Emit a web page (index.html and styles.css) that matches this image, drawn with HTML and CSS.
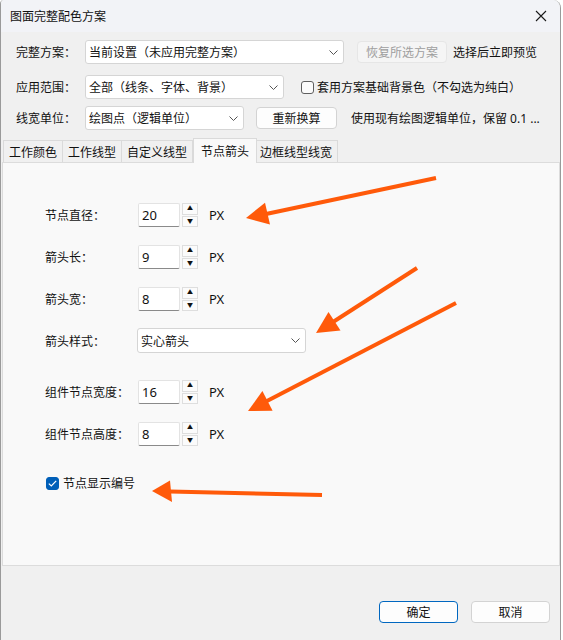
FILE: index.html
```html
<!DOCTYPE html>
<html lang="zh-CN">
<head>
    <meta charset="UTF-8">
    <title>图面完整配色方案</title>
    <link rel="stylesheet" href="styles.css">
</head>
<body>
    <div class="window">
        <div class="titlebar">
            <span class="title">图面完整配色方案</span>
            <span class="close">
                <svg width="12" height="12" viewBox="0 0 12 12"><path d="M1 1 L11 11 M11 1 L1 11" stroke="#1a1a1a" stroke-width="1.1" fill="none"/></svg>
            </span>
        </div>

        <div class="content">
            <div class="setting-row row-scheme">
                <span class="row-label">完整方案：</span>
                <div class="combo combo-scheme">
                    <span>当前设置（未应用完整方案）</span>
                    <svg class="chevron" width="9" height="5" viewBox="0 0 9 5"><path d="M0.5 0.5 L4.5 4.5 L8.5 0.5" stroke="#555" fill="none"/></svg>
                </div>
                <button class="btn btn-restore" disabled>恢复所选方案</button>
                <span class="hint">选择后立即预览</span>
            </div>

            <div class="setting-row row-range">
                <span class="row-label">应用范围：</span>
                <div class="combo combo-range">
                    <span>全部（线条、字体、背景）</span>
                    <svg class="chevron" width="9" height="5" viewBox="0 0 9 5"><path d="M0.5 0.5 L4.5 4.5 L8.5 0.5" stroke="#555" fill="none"/></svg>
                </div>
                <label class="check check-bg">
                    <span class="box"></span>
                    <span>套用方案基础背景色（不勾选为纯白）</span>
                </label>
            </div>

            <div class="setting-row row-unit">
                <span class="row-label">线宽单位：</span>
                <div class="combo combo-unit">
                    <span>绘图点（逻辑单位）</span>
                    <svg class="chevron" width="9" height="5" viewBox="0 0 9 5"><path d="M0.5 0.5 L4.5 4.5 L8.5 0.5" stroke="#555" fill="none"/></svg>
                </div>
                <button class="btn btn-recalc">重新换算</button>
                <span class="hint">使用现有绘图逻辑单位，保留 0.1 ...</span>
            </div>

            <div class="tabs">
                <span class="tab">工作颜色</span>
                <span class="tab">工作线型</span>
                <span class="tab">自定义线型</span>
                <span class="tab active">节点箭头</span>
                <span class="tab">边框线型线宽</span>
            </div>

            <div class="panel">
                <div class="field">
                    <span class="field-label">节点直径：</span>
                    <div class="spin-input">20</div>
                    <div class="spinner"><span class="up">▲</span><span class="down">▼</span></div>
                    <span class="unit">PX</span>
                </div>
                <div class="field">
                    <span class="field-label">箭头长：</span>
                    <div class="spin-input">9</div>
                    <div class="spinner"><span class="up">▲</span><span class="down">▼</span></div>
                    <span class="unit">PX</span>
                </div>
                <div class="field">
                    <span class="field-label">箭头宽：</span>
                    <div class="spin-input">8</div>
                    <div class="spinner"><span class="up">▲</span><span class="down">▼</span></div>
                    <span class="unit">PX</span>
                </div>
                <div class="field field-style">
                    <span class="field-label">箭头样式：</span>
                    <div class="combo combo-style">
                        <span>实心箭头</span>
                        <svg class="chevron" width="9" height="5" viewBox="0 0 9 5"><path d="M0.5 0.5 L4.5 4.5 L8.5 0.5" stroke="#555" fill="none"/></svg>
                    </div>
                </div>
                <div class="field">
                    <span class="field-label">组件节点宽度：</span>
                    <div class="spin-input">16</div>
                    <div class="spinner"><span class="up">▲</span><span class="down">▼</span></div>
                    <span class="unit">PX</span>
                </div>
                <div class="field">
                    <span class="field-label">组件节点高度：</span>
                    <div class="spin-input">8</div>
                    <div class="spinner"><span class="up">▲</span><span class="down">▼</span></div>
                    <span class="unit">PX</span>
                </div>
                <label class="check check-number">
                    <span class="box checked">
                        <svg width="9" height="7" viewBox="0 0 9 7"><path d="M0.8 3.6 L3.3 6 L8.2 0.8" stroke="#fff" stroke-width="1.2" fill="none"/></svg>
                    </span>
                    <span>节点显示编号</span>
                </label>
            </div>

            <div class="footer">
                <button class="btn btn-footer btn-default">确定</button>
                <button class="btn btn-footer">取消</button>
            </div>
        </div>

        <!-- orange callouts drawn over the dialog -->
        <svg class="callouts" width="563" height="640" viewBox="0 0 563 640">
            <g stroke="#ff5a0a" stroke-width="4" fill="#ff5a0a">
                <line x1="436" y1="178" x2="266" y2="214"/>
                <polygon stroke="none" points="246,218 270,224.5 265,202.7"/>
                <line x1="417" y1="268" x2="333" y2="322"/>
                <polygon stroke="none" points="316,333 340.5,330.4 328.5,311.9"/>
                <line x1="456" y1="303" x2="266" y2="401.5"/>
                <polygon stroke="none" points="248,411 272.6,410.7 262.4,391.1"/>
                <line x1="322" y1="495" x2="170" y2="491.5"/>
                <polygon stroke="none" points="152,491 172,502 170,480.5"/>
            </g>
        </svg>
    </div>
</body>
</html>
```

FILE: styles.css
```css
html, body {
    margin: 0;
    padding: 0;
    background: #ffffff;
}

body {
    font-family: "Noto Sans", "Noto Sans CJK SC", sans-serif;
    font-size: 12px;
    color: #111111;
}

.window {
    position: relative;
    width: 559px;
    height: 640px;
    background: #f0f0f0;
    border-left: 1px solid #9a9a9a;
    border-right: 1px solid #9a9a9a;
    border-top-right-radius: 8px;
    border-top-left-radius: 4px;
    overflow: hidden;
}

.titlebar {
    height: 32px;
    display: flex;
    align-items: center;
    justify-content: space-between;
    background: #f2f3f7;
    padding: 0 8px 0 9px;
}

.title {
    line-height: 1;
    padding-top: 1px;
}

.close {
    width: 12px;
    height: 12px;
    margin-right: 5px;
    display: flex;
}

/* top settings rows */
.setting-row {
    display: flex;
    align-items: center;
    height: 24px;
    padding-left: 15px;
}

.row-scheme { margin-top: 8px; }
.row-range { margin-top: 11px; }
.row-unit { margin-top: 7px; }

.row-label {
    width: 69px;
    flex-shrink: 0;
}

.combo {
    height: 24px;
    box-sizing: border-box;
    background: #ffffff;
    border: 1px solid #d5d5d5;
    border-radius: 3px;
    display: flex;
    align-items: center;
    justify-content: space-between;
    padding: 0 5px 0 3px;
}

.combo-scheme { width: 259px; }
.combo-range { width: 199px; }
.combo-unit { width: 159px; }

.btn {
    height: 22px;
    box-sizing: border-box;
    font: inherit;
    color: #111111;
    background: #fdfdfd;
    border: 1px solid #d3d3d3;
    border-radius: 4px;
    padding: 0;
}

.btn-restore {
    width: 90px;
    margin-left: 13px;
    background: #f5f5f5;
    border-color: #e6e6e6;
    color: #9e9e9e;
}

.btn-recalc {
    width: 81px;
    margin-left: 12px;
}

.hint {
    margin-left: 6px;
    white-space: nowrap;
}

.row-unit .hint { margin-left: 14px; }

.check {
    display: flex;
    align-items: center;
}

.check .box {
    width: 13px;
    height: 13px;
    box-sizing: border-box;
    border: 1px solid #5f5f5f;
    border-radius: 3px;
    background: #fbfbfb;
    margin-right: 3px;
    display: flex;
    align-items: center;
    justify-content: center;
}

.check .box.checked {
    background: #005fb8;
    border-color: #005fb8;
}

.check-bg { margin-left: 17px; }

/* tab strip */
.tabs {
    display: flex;
    align-items: flex-end;
    height: 24px;
    margin-top: 8px;
    padding-left: 2px;
    position: relative;
    z-index: 1;
}

.tab {
    height: 22px;
    box-sizing: border-box;
    padding: 0 5px;
    display: flex;
    align-items: center;
    border: 1px solid #dadada;
    border-bottom: none;
    border-left: none;
    background: #f0f0f0;
    white-space: nowrap;
}

.tab:first-child { border-left: 1px solid #dadada; }

.tab.active {
    height: 25px;
    margin: 0 -2px -1px 0;
    padding: 0 7px 1px 7px;
    border-left: 1px solid #dadada;
    background: #f9f9f9;
    position: relative;
}

/* tab page */
.panel {
    height: 404px;
    box-sizing: border-box;
    margin-left: 1px;
    background: #f9f9f9;
    border: 1px solid #dcdcdc;
    padding: 40px 0 0 42px;
}

.field {
    display: flex;
    align-items: center;
    height: 24px;
    margin-bottom: 18px;
}

.field-label {
    width: 93px;
    flex-shrink: 0;
}

.spin-input {
    width: 42px;
    height: 24px;
    box-sizing: border-box;
    background: #ffffff;
    border: 1px solid #e3e3e3;
    border-bottom: 1px solid #8a8a8a;
    border-radius: 2px;
    padding-left: 3px;
    font-size: 13px;
    line-height: 22px;
}

.spinner {
    width: 16px;
    height: 24px;
    margin-left: 2px;
    display: flex;
    flex-direction: column;
    gap: 1px;
}

.spinner span {
    flex: 1;
    box-sizing: border-box;
    background: #fbfbfb;
    border: 1px solid #dedede;
    font-size: 6px;
    line-height: 9px;
    text-align: center;
    color: #111;
}

.unit {
    margin-left: 11px;
    font-size: 13px;
}

.field-style {
    height: 25px;
    margin-top: -1px;
    margin-bottom: 27px;
}

.combo-style {
    width: 169px;
    height: 25px;
    margin-left: -1px;
}

.check-number {
    margin-top: 28px;
    margin-left: 1px;
}

.check-number .box { margin-right: 4px; }

/* dialog buttons */
.footer {
    display: flex;
    justify-content: flex-end;
    gap: 13px;
    padding: 35px 10px 0 0;
}

.btn-footer { width: 79px; }

.btn-default {
    border-color: #0067c0;
}

.callouts {
    position: absolute;
    left: -1px;
    top: 0;
    pointer-events: none;
}
```
